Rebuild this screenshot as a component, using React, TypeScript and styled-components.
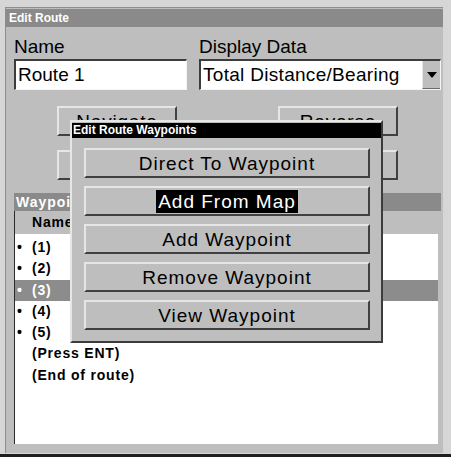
import React from 'react'
import styled, { createGlobalStyle } from 'styled-components'

const GlobalStyle = createGlobalStyle`
	html, body {
		margin: 0;
		padding: 0;
		background: #d6d6d6;
		font-family: 'Liberation Sans', Arial, sans-serif;
	}
	* {
		box-sizing: border-box;
	}
`

const waypoints = ['(1)', '(2)', '(3)', '(4)', '(5)']
const selectedIndex = 2

const menuItems = ['Direct To Waypoint', 'Add From Map', 'Add Waypoint', 'Remove Waypoint', 'View Waypoint']
const focusedItem = 1

const App: React.FC = () => {
	return (
		<>
			<GlobalStyle />
			<Screen>
				<Window>
					<TitleBar>Edit Route</TitleBar>
					<Body>
						<FieldGrid>
							<Label>Name</Label>
							<Label>Display Data</Label>
							<TextBox>Route 1</TextBox>
							<Select>
								<SelectText>Total Distance/Bearing</SelectText>
								<DropButton>
									<svg width="10" height="6" viewBox="0 0 10 6">
										<polygon points="0,0 10,0 5,6" fill="#000" />
									</svg>
								</DropButton>
							</Select>
						</FieldGrid>
						<ButtonGrid>
							<Button>Navigate</Button>
							<Button>Reverse</Button>
							<Button>Insert</Button>
							<Button>Delete</Button>
						</ButtonGrid>
						<SectionHeader>Waypoints</SectionHeader>
						<ListBox>
							<ListHeader>Name</ListHeader>
							<ListBody>
								{waypoints.map((wp, i) => (
									<ListRow key={wp} $selected={i === selectedIndex}>
										<Bullet>•</Bullet>
										{wp}
									</ListRow>
								))}
								<ListRow $indent>(Press ENT)</ListRow>
								<ListRow $indent>(End of route)</ListRow>
							</ListBody>
						</ListBox>
					</Body>

					<Popup>
						<PopupTitle>Edit Route Waypoints</PopupTitle>
						<MenuList>
							{menuItems.map((item, i) => (
								<MenuButton key={item}>
									{i === focusedItem ? <Focused>{item}</Focused> : item}
								</MenuButton>
							))}
						</MenuList>
					</Popup>
				</Window>
			</Screen>
		</>
	)
}

export default App

const Screen = styled.div`
	width: 451px;
	height: 457px;
	padding: 7px 8px 0 5px;
	background: #d6d6d6;
	border-bottom: 3px solid #1e1e1e;
	overflow: hidden;
`

const Window = styled.div`
	position: relative;
	display: flex;
	flex-direction: column;
	width: 438px;
	height: 446px;
	background: #bebebe;
	border-top: 1px solid #8e8e8e;
	border-left: 1px solid #8e8e8e;
`

const TitleBar = styled.div`
	height: 18px;
	margin-top: 1px;
	padding-left: 3px;
	background: #8a8a8a;
	color: #fff;
	font-size: 12px;
	font-weight: bold;
	line-height: 18px;
`

const Body = styled.div`
	padding: 0 2px 0 8px;
`

const FieldGrid = styled.div`
	display: grid;
	grid-template-columns: 173px 242px;
	column-gap: 12px;
	row-gap: 2px;
	margin-top: 9px;
`

const Label = styled.div`
	font-size: 19px;
	line-height: 21px;
	color: #000;
`

const TextBox = styled.div`
	height: 31px;
	padding-left: 2px;
	background: #fff;
	border-top: 2px solid #3c3c3c;
	border-left: 2px solid #3c3c3c;
	border-bottom: 1px solid #f4f4f4;
	border-right: 1px solid #f4f4f4;
	font-size: 19px;
	line-height: 27px;
	color: #000;
`

const Select = styled(TextBox)`
	display: flex;
	padding-left: 2px;
	letter-spacing: 0.3px;
`

const SelectText = styled.div`
	flex: 1;
	white-space: nowrap;
	overflow: hidden;
`

const DropButton = styled.div`
	display: flex;
	align-items: center;
	justify-content: center;
	width: 18px;
	background: #bebebe;
	border-left: 1px solid #e6e6e6;
	border-bottom: 1px solid #6a6a6a;
`

const ButtonGrid = styled.div`
	display: grid;
	grid-template-columns: 120px 120px;
	column-gap: 101px;
	row-gap: 14px;
	margin: 16px 0 0 43px;
`

const Button = styled.div`
	height: 30px;
	background: #bebebe;
	border-top: 2px solid #e6e6e6;
	border-left: 2px solid #e6e6e6;
	border-right: 2px solid #404040;
	border-bottom: 2px solid #404040;
	text-align: center;
	font-size: 19px;
	line-height: 27px;
	letter-spacing: 0.8px;
	color: #000;
`

const SectionHeader = styled.div`
	width: 427px;
	height: 18px;
	margin-top: 13px;
	padding-left: 2px;
	background: #8a8a8a;
	color: #fff;
	font-size: 14px;
	font-weight: bold;
	letter-spacing: 1px;
	line-height: 18px;
`

const ListBox = styled.div`
	display: flex;
	flex-direction: column;
	width: 424px;
	height: 233px;
	background: #fff;
	border-left: 1px solid #2a2a2a;
`

const ListHeader = styled.div`
	height: 23px;
	padding-left: 17px;
	background: #bebebe;
	font-size: 14px;
	font-weight: bold;
	letter-spacing: 0.8px;
	line-height: 23px;
	color: #000;
`

const ListBody = styled.div`
	padding-top: 3px;
`

const ListRow = styled.div<{ $selected?: boolean; $indent?: boolean }>`
	height: 21.3px;
	padding-left: ${p => (p.$indent ? '17px' : '2px')};
	background: ${p => (p.$selected ? '#8c8c8c' : 'transparent')};
	color: ${p => (p.$selected ? '#fff' : '#000')};
	font-size: 14px;
	font-weight: bold;
	letter-spacing: 0.8px;
	line-height: 21.3px;
	white-space: nowrap;
`

const Bullet = styled.span`
	display: inline-block;
	width: 15px;
`

const Popup = styled.div`
	position: absolute;
	left: 64px;
	top: 112px;
	width: 313px;
	height: 223px;
	background: #bebebe;
	border-top: 2px solid #e6e6e6;
	border-left: 2px solid #e6e6e6;
	border-right: 2px solid #3c3c3c;
	border-bottom: 2px solid #3c3c3c;
`

const PopupTitle = styled.div`
	height: 15px;
	margin-top: 1px;
	padding-left: 1px;
	background: #000;
	color: #fff;
	font-size: 12px;
	font-weight: bold;
	line-height: 15px;
`

const MenuList = styled.div`
	display: flex;
	flex-direction: column;
	gap: 8px;
	margin: 10px 11px 0 12px;
`

const MenuButton = styled(Button)`
	letter-spacing: 1px;
`

const Focused = styled.span`
	padding: 1px 2px;
	background: #000;
	color: #fff;
`
